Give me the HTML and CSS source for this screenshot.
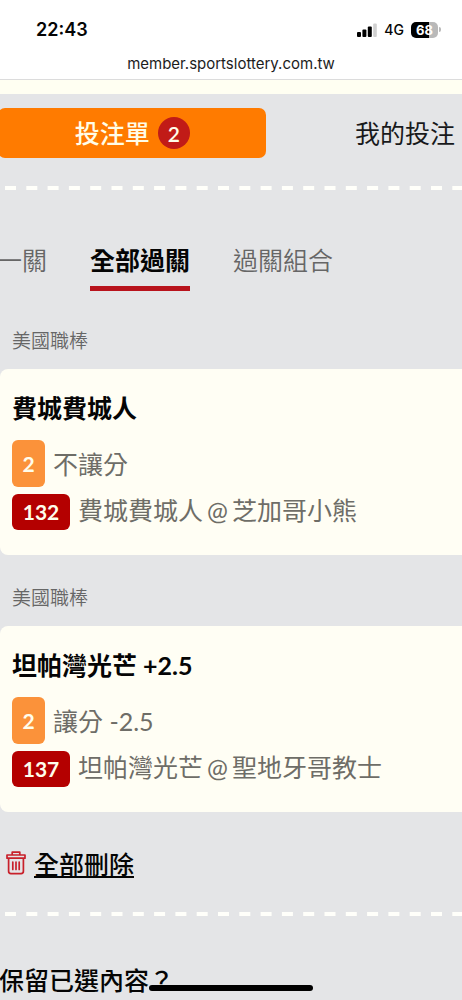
FILE: index.html
```html
<!DOCTYPE html>
<html lang="zh-Hant">
<head>
<meta charset="utf-8">
<meta name="viewport" content="width=device-width, initial-scale=1">
<title>投注單</title>
<link rel="stylesheet" href="styles.css">
</head>
<body>
<header class="browser">
  <div class="status">
    <time class="clock">22:43</time>
    <div class="signals">
      <svg class="bars" width="20" height="14" viewBox="0 0 20 14" aria-hidden="true">
        <rect x="0" y="9" width="4" height="5" rx="1"/>
        <rect x="5.4" y="6.5" width="4" height="7.5" rx="1"/>
        <rect x="10.8" y="3.5" width="4" height="10.5" rx="1"/>
        <rect x="16.2" y="0.5" width="3.6" height="13.5" rx="1" fill="#d0d0d0"/>
      </svg>
      <span class="network">4G</span>
      <span class="battery">68</span>
    </div>
  </div>
  <div class="address">member.sportslottery.com.tw</div>
</header>
<div class="strip"></div>
<main class="page">
  <nav class="switch">
    <button class="slip" type="button">投注單<span class="count">2</span></button>
    <button class="mine" type="button">我的投注</button>
  </nav>
  <svg class="dashes" height="4" aria-hidden="true"><line x1="5" y1="2" x2="100%" y2="2" stroke="#fffffa" stroke-width="4" stroke-dasharray="11 10.3"/></svg>
  <nav class="tabs">
    <button class="tab" type="button">一關</button>
    <button class="tab current" type="button">全部過關</button>
    <button class="tab" type="button">過關組合</button>
  </nav>
  <section>
    <h2 class="league">美國職棒</h2>
    <article class="card">
      <h3 class="pick">費城費城人</h3>
      <div class="row"><span class="tag">2</span><span>不讓分</span></div>
      <div class="row"><span class="tag code">132</span><span class="match"><span>費城費城人</span> <span>@</span> <span>芝加哥小熊</span></span></div>
    </article>
  </section>
  <section>
    <h2 class="league">美國職棒</h2>
    <article class="card">
      <h3 class="pick">坦帕灣光芒 +2.5</h3>
      <div class="row"><span class="tag">2</span><span>讓分 -2.5</span></div>
      <div class="row"><span class="tag code">137</span><span class="match"><span>坦帕灣光芒</span> <span>@</span> <span>聖地牙哥教士</span></span></div>
    </article>
  </section>
  <button class="clear" type="button">
    <svg width="20" height="24" viewBox="0 0 20 24" fill="none" stroke="#c8202b" stroke-width="1.7" stroke-linejoin="round" stroke-linecap="round" aria-hidden="true">
      <path d="M6.2 4V1.2H13.8V4M1 4H19V7.2H1ZM2.6 7.2V20.3Q2.6 22.6 4.9 22.6H15.1Q17.4 22.6 17.4 20.3V7.2"/>
      <path d="M6.8 11V18.5M10 11V18.5M13.2 11V18.5"/>
    </svg>
    <span class="clear-label">全部刪除</span>
  </button>
  <svg class="dashes" height="4" aria-hidden="true"><line x1="5" y1="2" x2="100%" y2="2" stroke="#fffffa" stroke-width="4" stroke-dasharray="11 10.3"/></svg>
  <p class="keep">保留已選內容？</p>
</main>
<div class="home"></div>
</body>
</html>
```

FILE: styles.css
```css
* { box-sizing: border-box; }
body {
  margin: 0;
  min-height: 100vh;
  overflow-x: hidden;
  background: #e4e5e7;
  color: #050505;
  font-family: Lato, "Noto Sans CJK TC", sans-serif;
  font-size: 25px;
  line-height: 36px;
}
button {
  padding: 0;
  border: 0;
  background: none;
  color: inherit;
  font: inherit;
  white-space: nowrap;
}
h2, h3, p { margin: 0; }
svg { flex: none; }

.browser {
  height: 80px;
  padding-top: 18px;
  border-bottom: 1px solid #dcdcdc;
  background: #fff;
  font-family: Inter, "Liberation Sans", sans-serif;
}
.status {
  display: flex;
  justify-content: space-between;
  align-items: center;
  height: 24px;
  padding: 0 24px 0 36px;
}
.clock { font-size: 18px; font-weight: 600; }
.signals { display: flex; align-items: center; gap: 7px; }
.network { font-size: 14px; font-weight: 500; }
.battery {
  position: relative;
  width: 27px;
  height: 16px;
  border-radius: 5px;
  background: linear-gradient(90deg, #000 68%, #b9b9b9 68%);
  color: #fff;
  font-size: 13px;
  font-weight: 700;
  line-height: 16px;
  text-align: center;
}
.battery::after {
  content: "";
  position: absolute;
  top: 5px;
  right: -3px;
  width: 2px;
  height: 5px;
  border-radius: 0 2px 2px 0;
  background: #b9b9b9;
}
.address {
  margin-top: 10px;
  color: #1c1c1c;
  font-size: 15px;
  line-height: 24px;
  text-align: center;
}
.strip { height: 14px; background: #fffff2; }

.page { padding-top: 14px; overflow: hidden; }
.switch { display: flex; justify-content: space-between; padding-right: 7px; }
.slip {
  display: flex;
  align-items: center;
  justify-content: center;
  gap: 8px;
  width: 59%;
  height: 50px;
  margin-left: -2px;
  border-radius: 7px;
  background: #ff7b00;
  color: #fffde8;
  font-weight: 500;
}
.count {
  width: 32px;
  height: 32px;
  border-radius: 50%;
  background: #c11b17;
  font-size: 21px;
  font-weight: 600;
  line-height: 34px;
}
.mine { color: #18191b; font-weight: 400; }
.dashes { display: block; width: 100%; margin-top: 28px; }
.tabs { display: flex; gap: 43px; margin: 52px 0 0 -3px; }
.tab { height: 49px; padding-bottom: 13px; color: #666; font-weight: 350; }
.current { border-bottom: 5px solid #b8131c; padding-bottom: 8px; color: #050505; font-weight: 700; }

.league {
  padding: 36px 12px 14px;
  color: #666;
  font-size: 19px;
  font-weight: 350;
  line-height: 28px;
}
.card {
  padding: 21px 12px 25px;
  margin-right: -8px;
  border-radius: 8px;
  background: #fffef4;
}
section + section .league { padding-top: 29px; }
.pick { margin-bottom: 14px; font-size: 25px; font-weight: 700; line-height: 36px; }
.row { display: flex; align-items: center; gap: 8px; color: #6e6d67; font-weight: 400; line-height: 34px; white-space: nowrap; }
.row + .row { align-items: flex-start; margin-top: 7px; line-height: 32px; }
.match { display: flex; gap: 4px; }
.tag {
  width: 33px;
  height: 47px;
  border-radius: 6px;
  background: #fb923a;
  color: #fffdec;
  font-size: 21px;
  font-weight: 700;
  line-height: 47px;
  text-align: center;
}
.row .code { width: 58px; height: 36px; background: #b40000; line-height: 36px; }

.clear { display: flex; align-items: center; gap: 8px; margin: 36px 0 0 6px; font-weight: 500; }
.clear-label { height: 30px; border-bottom: 2px solid #050505; line-height: 32px; }
.clear + .dashes { margin-top: 34px; }
.keep { margin: 46px 0 0 -1px; font-weight: 500; }
.home {
  position: fixed;
  bottom: 9px;
  left: 50%;
  width: 164px;
  height: 6px;
  margin-left: -82px;
  border-radius: 3px;
  background: #000;
}
```
